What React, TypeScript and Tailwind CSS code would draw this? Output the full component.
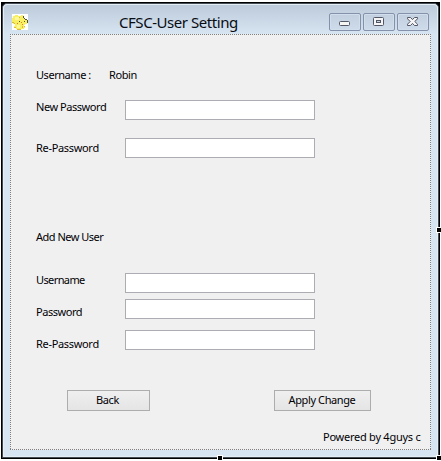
import type { ReactNode } from "react";

function Caption({ children, className = "tracking-[-0.4px]" }: { children: ReactNode; className?: string }) {
  return (
    <span className={`block h-4 shrink-0 whitespace-pre text-[11px] leading-4 text-[#000005] ${className}`}>{children}</span>
  );
}

function Field({ label, rowClass, labelClass }: { label: string; rowClass: string; labelClass: string }) {
  return (
    <label className={`flex items-start pl-[26px] ${rowClass}`}>
      <span className="w-[89px] shrink-0">
        <Caption className={labelClass}>{label}</Caption>
      </span>
      <input className="h-5 w-[190px] border border-[#abadb3] bg-white px-1 text-[11px] outline-none" />
    </label>
  );
}

function WindowButton({ label, children }: { label: string; children: ReactNode }) {
  return (
    <button
      aria-label={label}
      className="flex h-[18px] w-8 items-center justify-center rounded-[2px] border border-[#8391ab] bg-linear-to-b from-[#c1cfdf] to-[#cddbea] shadow-[inset_0_0_0_1px_#d2deeb]"
    >
      {children}
    </button>
  );
}

function AppIcon() {
  return (
    <svg width="16" height="16" viewBox="0 0 16 16" shapeRendering="crispEdges">
      <path fill="#fff" d="M0 0h16v16H0z" />
      <path fill="#f9ef62" d="M3 1h3v1h3V1h2v1h1v2h1v1h2v1h1v3h-1v1h-2v1h-1v2h1v1h-1v1H4v-1H2v-2h1v-2H1V9H0V4h1V2h2z" />
      <path fill="#fdf89c" d="M3 3h4v3H3zM5 11h3v3H5z" />
      <path fill="#dcbd38" d="M0 8h2v1H0zM2 9h1v1H2zM2 13h2v1H2zM5 15h4v1H5zM7 3h1v1H7zM10 12h1v2h-1zM12 12h1v1h-1z" />
      <path fill="#565139" d="M11 2h1v2h-1zM12 4h1v1h-1zM13 5h2v1h-2zM15 6h1v3h-1zM7 7h1v1H7zM12 7h1v1h-1z" />
      <path fill="#ed7834" d="M5 9h1v1H5zM9 8h1v1H9zM10 10h1v1h-1z" />
    </svg>
  );
}

function Handle({ className }: { className: string }) {
  return <span className={`absolute size-[6px] border border-white bg-black ${className}`} />;
}

export default function App() {
  return (
    <div className="relative h-[461px] w-[441px] overflow-hidden bg-white pl-px pt-[2px] font-['Noto_Sans',sans-serif]">
      <div className="h-[457px] w-[439px] bg-black p-px">
        <div className="h-[455px] w-[437px] rounded-t-[5px] border border-[#454b52] bg-[#d7e4f2]">
          <div className="h-[453px] rounded-t-[4px] border border-[#e5edf5] bg-[linear-gradient(to_bottom,#bdcbda_0px,#d7e4f2_29px)] px-[6px]">
            <header className="flex h-[29px] items-start pl-[2px]">
              <div className="mt-[9px]"><AppIcon /></div>
              <h1 className="ml-[91px] mt-[7px] w-[210px] whitespace-nowrap text-[15px] leading-5 tracking-[-0.45px] text-[#080c14]">CFSC-User Setting</h1>
              <div className="mt-2 flex gap-[2px]">
                <WindowButton label="Minimize">
                  <svg width="12" height="12" viewBox="0 0 12 12"><rect x=".5" y="5.5" width="10" height="4" rx="1" fill="#f5f5f5" stroke="#535666" /></svg>
                </WindowButton>
                <WindowButton label="Maximize">
                  <svg width="12" height="12" viewBox="0 0 12 12"><rect x=".5" y="1.5" width="10" height="8" rx="1" fill="#f5f5f5" stroke="#535666" /><rect x="3.5" y="4.5" width="4" height="2" fill="#c6d4e4" stroke="#535666" /></svg>
                </WindowButton>
                <WindowButton label="Close">
                  <svg width="12" height="12" viewBox="0 0 12 12"><path d="M.5 1.5h3L5.5 3.6l2-2.1h3v1.3L7.8 5.5l2.7 2.7v1.3h-3l-2-2.1-2 2.1h-3V8.2l2.7-2.7L.5 2.8z" fill="#f5f5f5" stroke="#535666" /></svg>
                </WindowButton>
              </div>
            </header>
            <main className="h-[416px] w-[421px] bg-[repeating-linear-gradient(to_right,#808080_0px_1px,#f0f0f0_1px_2px)] p-px">
              <div className="-mx-px h-[414px] bg-[repeating-linear-gradient(to_bottom,#f0f0f0_0px_1px,#808080_1px_2px)] px-px">
                <div className="h-[414px] w-[419px] bg-[#f0f0f0]">
                  <div className="-ml-px flex h-[65px] items-start pl-[26px] pt-[32px]">
                    <Caption className="w-[73px] tracking-[-0.45px]">Username :</Caption>
                    <Caption>Robin</Caption>
                  </div>
                  <div className="-ml-px">
                    <Field label="New Password" rowClass="h-[38px]" labelClass="-mt-px tracking-[-0.45px]" />
                    <Field label="Re-Password" rowClass="h-[59px]" labelClass="mt-[2px] tracking-[-0.32px]" />
                    <div className="h-[76px] pl-[26px] pt-[32px]"><Caption className="tracking-[-0.5px]">Add New User</Caption></div>
                    <Field label="Username" rowClass="h-[26px]" labelClass="-mt-px tracking-[-0.6px]" />
                    <Field label="Password" rowClass="h-[31px]" labelClass="mt-[5px] tracking-[-0.45px]" />
                    <Field label="Re-Password" rowClass="h-[60px]" labelClass="mt-[6px] tracking-[-0.32px]" />
                  </div>
                  <div className="flex gap-[124px] pl-[56px]">
                    <button className="flex h-[21px] w-[83px] items-start justify-center border border-[#adadad] bg-linear-to-b from-[#efefef] to-[#e5e5e5] pt-px pr-[2px]"><Caption>Back</Caption></button>
                    <button className="flex h-[21px] w-[97px] items-start justify-center border border-[#adadad] bg-linear-to-b from-[#efefef] to-[#e5e5e5] pt-px pr-px"><Caption>Apply Change</Caption></button>
                  </div>
                  <div className="pl-[312px] pt-[18px]"><Caption className="tracking-[-0.25px]">Powered by 4guys c</Caption></div>
                </div>
              </div>
            </main>
          </div>
        </div>
      </div>
      <Handle className="left-[436px] top-[227px]" />
      <Handle className="left-[217px] top-[455px]" />
      <Handle className="left-[436px] top-[455px]" />
    </div>
  );
}
